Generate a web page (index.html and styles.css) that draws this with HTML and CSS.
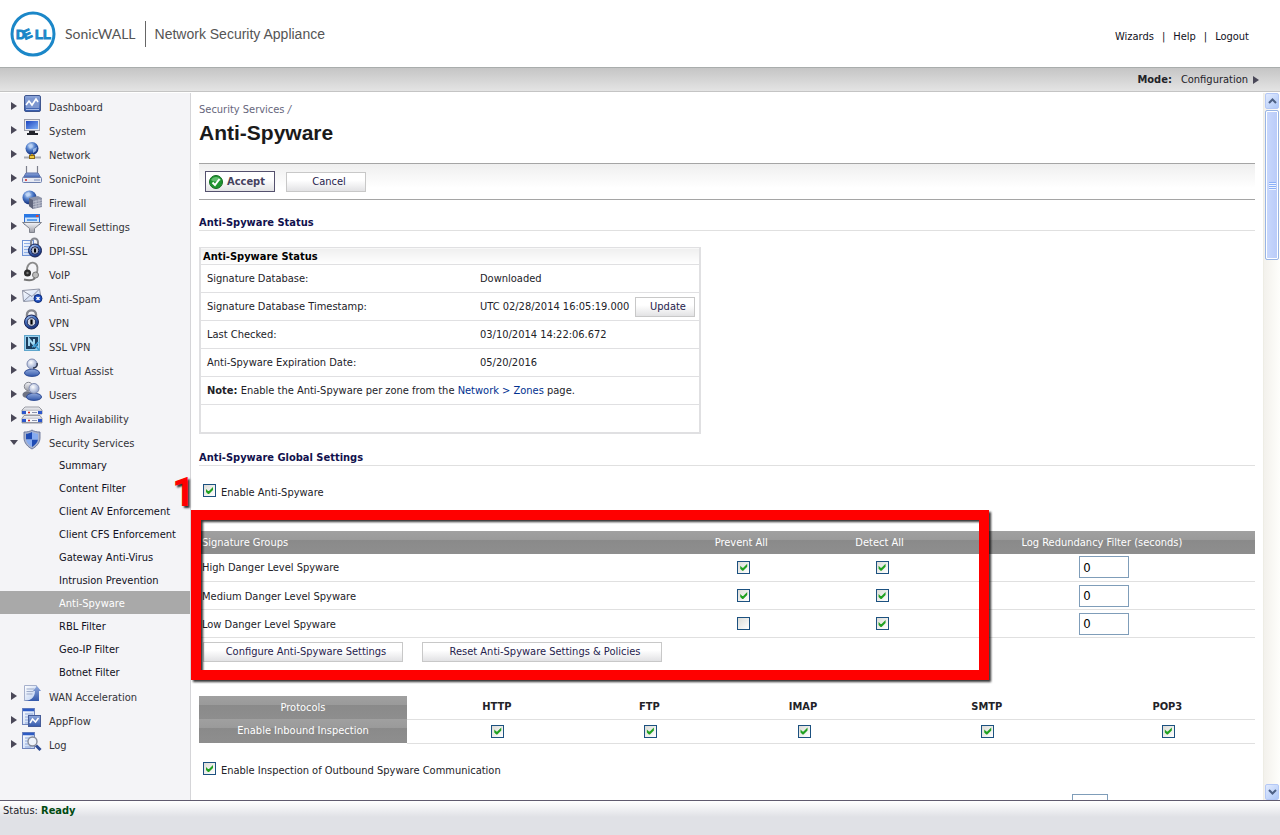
FILE: index.html
```html
<!DOCTYPE html>
<html lang="en">
<head>
    <meta charset="UTF-8">
    <meta name="viewport" content="width=device-width, initial-scale=1.0">
    <title>SonicWALL - Anti-Spyware</title>
    <link rel="stylesheet" href="styles.css">
</head>
<body>
    <svg class="defs" width="0" height="0" aria-hidden="true">
        <defs>
            <linearGradient id="blue" x1="0" y1="0" x2="0" y2="1">
                <stop offset="0" stop-color="#8fa8dc"/>
                <stop offset="1" stop-color="#3459ab"/>
            </linearGradient>
            <linearGradient id="screen" x1="0" y1="0" x2="1" y2="1">
                <stop offset="0" stop-color="#1c44c0"/>
                <stop offset="1" stop-color="#7fb0f5"/>
            </linearGradient>
            <linearGradient id="silver" x1="0" y1="0" x2="0" y2="1">
                <stop offset="0" stop-color="#f4f5f9"/>
                <stop offset="1" stop-color="#9a9ca6"/>
            </linearGradient>
            <linearGradient id="page" x1="0" y1="0" x2="1" y2="1">
                <stop offset="0" stop-color="#ffffff"/>
                <stop offset="1" stop-color="#b9cdf0"/>
            </linearGradient>
            <radialGradient id="globe" cx=".4" cy=".3" r=".7">
                <stop offset="0" stop-color="#d5e6fb"/>
                <stop offset=".5" stop-color="#4a78c8"/>
                <stop offset="1" stop-color="#122a72"/>
            </radialGradient>
            <radialGradient id="head" cx=".4" cy=".35" r=".7">
                <stop offset="0" stop-color="#ffffff"/>
                <stop offset="1" stop-color="#8a9cc8"/>
            </radialGradient>
        </defs>
    </svg>

    <header class="header">
        <div class="brand">
            <svg class="logo" width="46" height="46" viewBox="0 0 46 46" role="img" aria-label="Dell">
                <circle cx="23" cy="23" r="21" fill="#fff" stroke="#1b87c8" stroke-width="3"/>
                <text class="logo-text" x="6 15 25 33" y="28 29 28 28" rotate="0 -24 0 0">DELL</text>
            </svg>
            <span class="brand-name">SonicWALL</span>
            <span class="brand-product">Network Security Appliance</span>
        </div>
        <nav class="top-links">
            <a href="#">Wizards</a><span>|</span><a href="#">Help</a><span>|</span><a href="#">Logout</a>
        </nav>
    </header>

    <div class="mode-bar">
        <b>Mode:</b>
        <a href="#">Configuration</a>
        <i class="arrow"></i>
    </div>

    <div class="workspace">
        <nav class="sidebar">
            <ul class="menu">
                <li><a href="#"><i class="arrow"></i>
                    <svg class="icon" viewBox="0 0 20 20"><rect x="2.5" y="1.5" width="16" height="16" rx="1.5" fill="url(#blue)" stroke="#3f568f"/><rect x="4" y="4" width="13" height="10" fill="#7d97d0"/><path d="M4 11l3-4 3 4 4-6 2 3" fill="none" stroke="#fff" stroke-width="1.6"/><path d="M4 15.500h13" stroke="#a9bce6"/></svg>
                    <span>Dashboard</span></a></li>
                <li><a href="#"><i class="arrow"></i>
                    <svg class="icon" viewBox="0 0 20 20"><rect x="2.500" y="1.500" width="15" height="11" fill="#e8e9ee" stroke="#9b9da8"/><rect x="4" y="3" width="12" height="8" fill="url(#screen)"/><path d="M7 13h6v2h3v2H5v-2h2z" fill="#22242c"/></svg>
                    <span>System</span></a></li>
                <li><a href="#"><i class="arrow"></i>
                    <svg class="icon" viewBox="0 0 20 20"><circle cx="10" cy="6.500" r="6.500" fill="url(#globe)"/><path d="M6 3l4-1 1 3-3 2zM11 7l4-2-1 4-3 2z" fill="#b8d2f5" opacity=".7"/><path d="M2 15.500h17" stroke="#a9abb2" stroke-width="2"/><path d="M10 12v3" stroke="#c99a20" stroke-width="2"/><rect x="7.500" y="13.500" width="5" height="3" fill="#f0c93c" stroke="#8a6a14"/></svg>
                    <span>Network</span></a></li>
                <li><a href="#"><i class="arrow"></i>
                    <svg class="icon" viewBox="0 0 20 20"><path d="M4.500 0v8M15.500 0v8" stroke="#7c7f8c" stroke-width="1.200"/><path d="M4 7h12l3 5H1z" fill="url(#blue)" stroke="#5d73ad"/><rect x=".5" y="11.500" width="19" height="5" rx="1" fill="#e6e9f3" stroke="#6d7fae"/><path d="M3 14h2" stroke="#d02020" stroke-width="1.500"/><path d="M12 14h6" stroke="#7c8dbb"/></svg>
                    <span>SonicPoint</span></a></li>
                <li><a href="#"><i class="arrow"></i>
                    <svg class="icon" viewBox="0 0 20 20"><circle cx="7.500" cy="7.500" r="7" fill="url(#globe)"/><path d="M3 4l4-2 2 3-4 2z" fill="#c4d9f6" opacity=".7"/><path d="M7 8l9-2 4 2v9l-9 2-4-3z" fill="#8d93a8"/><path d="M7 8l4 2v9l-4-3z" fill="#5f657c"/><path d="M11 12l9-2M11 14.500l9-2M11 17l9-2M14 10v8M17 9v8" stroke="#c1c5d3" stroke-width=".8"/></svg>
                    <span>Firewall</span></a></li>
                <li><a href="#"><i class="arrow"></i>
                    <svg class="icon" viewBox="0 0 20 20"><rect x="2.500" y=".5" width="15" height="10" fill="#cfe4fb" stroke="#2c6bd0"/><rect x="2" y="0" width="16" height="3.500" fill="#2a78e4"/><rect x="14" y="1" width="2.500" height="2" fill="#e8452a"/><path d="M5 6h10" stroke="#5fa0ec" stroke-width="2"/><path d="M.5 8.500h19l-7 6v4h-5v-4z" fill="url(#silver)" stroke="#7f828c"/></svg>
                    <span>Firewall Settings</span></a></li>
                <li><a href="#"><i class="arrow"></i>
                    <svg class="icon" viewBox="0 0 20 20"><rect x=".5" y="2.500" width="11" height="15" fill="url(#page)" stroke="#6f92d4"/><path d="M2 5.500h7M2 8.500h7M2 11.500h7M2 14.500h7" stroke="#8fb0e8"/><path d="M9 8V4a3.500 3.500 0 0 1 7 0v3" fill="none" stroke="#84868e" stroke-width="2"/><circle cx="13" cy="12.500" r="6.500" fill="url(#globe)" stroke="#1a2454"/><circle cx="13" cy="12.500" r="3.800" fill="#b5bccd" stroke="#1a2454"/><path d="M13 10.500v4" stroke="#000" stroke-width="2"/></svg>
                    <span>DPI-SSL</span></a></li>
                <li><a href="#"><i class="arrow"></i>
                    <svg class="icon" viewBox="0 0 20 20"><path d="M5 10C4 4 8-.5 12 .8c4 1.200 4.500 7 2 11" fill="none" stroke="#8b8b8b" stroke-width="1.800"/><circle cx="5.500" cy="11" r="3.500" fill="#2a2a2a"/><circle cx="5.500" cy="11" r="1.200" fill="#777"/><circle cx="13.500" cy="13" r="3" fill="#bdbdbd" stroke="#777"/><path d="M13 16c-2 2.500-7 2.500-11 1.500" fill="none" stroke="#777" stroke-width="2"/></svg>
                    <span>VoIP</span></a></li>
                <li><a href="#"><i class="arrow"></i>
                    <svg class="icon" viewBox="0 0 20 20"><path d="M.5 4.500l17-1.500 2 11-18 1.500z" fill="url(#page)" stroke="#9297a8"/><path d="M.5 4.500l9.500 6 7.500-7.500M2 15l6-5.500M19 14l-7-5" fill="none" stroke="#8b90a2"/><circle cx="16" cy="12.500" r="4" fill="#1d4dc0" stroke="#12307c"/><path d="M14.500 11l3 3M17.500 11l-3 3" stroke="#fff" stroke-width="1.300"/></svg>
                    <span>Anti-Spam</span></a></li>
                <li><a href="#"><i class="arrow"></i>
                    <svg class="icon" viewBox="0 0 20 20"><path d="M5 8V4.500c0-5.500 9-5.500 9 0V8" fill="none" stroke="#85878f" stroke-width="2.400"/><circle cx="9.500" cy="12" r="7" fill="url(#globe)" stroke="#1a2454"/><circle cx="9.500" cy="12" r="4.300" fill="#d0d4df" stroke="#1a2454"/><path d="M9.500 9.500v5" stroke="#000" stroke-width="2.200"/></svg>
                    <span>VPN</span></a></li>
                <li><a href="#"><i class="arrow"></i>
                    <svg class="icon" viewBox="0 0 20 20"><rect x="2.500" y="1.500" width="15" height="15" fill="#9ad0ee" stroke="#5fa6cc"/><path d="M4 3h12v8l-3 4H4z" fill="#1c3e60"/><path d="M7 12V5l5 6V5" fill="none" stroke="#a4d8f2" stroke-width="2"/><path d="M10 13c3-1 5-2 6-5M12 10l5 6" fill="none" stroke="#3c9bd2" stroke-width="1.500"/></svg>
                    <span>SSL VPN</span></a></li>
                <li><a href="#"><i class="arrow"></i>
                    <svg class="icon" viewBox="0 0 20 20"><path d="M2.500 15c0-5 15-5 15 0 0 4.500-15 4.500-15 0z" fill="url(#blue)" stroke="#2c4a94"/><circle cx="10" cy="6" r="5" fill="url(#head)" stroke="#7f8bb0"/><path d="M15 5c1 3-1 5-4 5" fill="none" stroke="#333a50" stroke-width="1.500"/></svg>
                    <span>Virtual Assist</span></a></li>
                <li><a href="#"><i class="arrow"></i>
                    <svg class="icon" viewBox="0 0 20 20"><path d="M.5 13c0-5 10-5 10 0 0 4-10 4-10 0z" fill="#6d7283"/><circle cx="6.500" cy="4.500" r="4.200" fill="url(#silver)" stroke="#84868f"/><path d="M4.500 15c0-5 15-5 15 0 0 4.500-15 4.500-15 0z" fill="url(#blue)" stroke="#2c4a94"/><circle cx="12" cy="6.500" r="5" fill="url(#head)" stroke="#7f8bb0"/></svg>
                    <span>Users</span></a></li>
                <li><a href="#"><i class="arrow"></i>
                    <svg class="icon" viewBox="0 0 20 20"><path d="M3 1h14l3 3v4H0V4z" fill="url(#silver)" stroke="#84868f" stroke-width=".8"/><path d="M0 5h20v3H0z" fill="#f6f7fb"/><path d="M0 5h4v3H0zM16 5h4v3h-4z" fill="#2b56cc"/><path d="M6 6.500h2" stroke="#d02020" stroke-width="1.500"/><path d="M10 6.500h5" stroke="#8b93ad"/><path d="M2 9.500h16l2 3V17H0v-4.500z" fill="url(#silver)" stroke="#84868f" stroke-width=".8"/><path d="M0 13h20v3H0z" fill="#f6f7fb"/><path d="M0 13h4v3H0zM16 13h4v3h-4z" fill="#2b56cc"/><path d="M6 14.500h2" stroke="#d02020" stroke-width="1.500"/><path d="M10 14.500h5" stroke="#8b93ad"/></svg>
                    <span>High Availability</span></a></li>
                <li><a href="#"><i class="arrow arrow-open"></i>
                    <svg class="icon" viewBox="0 0 20 20"><path d="M10 0c2 1.500 5 2 8 2v6c0 5-4 9-8 11-4-2-8-6-8-11V2c3 0 6-.5 8-2z" fill="#a9b3cd" stroke="#5a678f" stroke-width=".8"/><path d="M10 2v7.500H4V3.800c2 0 4-.8 6-1.800zM10 9.500h6c-.5 3-3 5.500-6 7.500z" fill="#1e4bb4"/><path d="M10 2c2 1 4 1.800 6 1.800v5.700h-6zM4 9.500h6V17c-3-2-5.500-4.500-6-7.500z" fill="#86abf0"/></svg>
                    <span>Security Services</span></a>
                    <ul class="submenu">
                        <li><a href="#">Summary</a></li>
                        <li><a href="#">Content Filter</a></li>
                        <li><a href="#">Client AV Enforcement</a></li>
                        <li><a href="#">Client CFS Enforcement</a></li>
                        <li><a href="#">Gateway Anti-Virus</a></li>
                        <li><a href="#">Intrusion Prevention</a></li>
                        <li><a href="#" class="active">Anti-Spyware</a></li>
                        <li><a href="#">RBL Filter</a></li>
                        <li><a href="#">Geo-IP Filter</a></li>
                        <li><a href="#">Botnet Filter</a></li>
                    </ul></li>
                <li><a href="#"><i class="arrow"></i>
                    <svg class="icon" viewBox="0 0 20 20"><path d="M2.500 1.500h12v15h-12z" fill="url(#page)" stroke="#a6b0cc"/><path d="M4.500 5h8M4.500 7.500h7M4.500 10h6" stroke="#9eabc9"/><path d="M1 17c7 0 12-3 12-10h-2l4-5 4 5h-2v10z" fill="url(#blue)"/></svg>
                    <span>WAN Acceleration</span></a></li>
                <li><a href="#"><i class="arrow"></i>
                    <svg class="icon" viewBox="0 0 20 20"><rect x=".5" y=".5" width="12" height="16" fill="url(#page)" stroke="#6f84bb"/><path d="M1 2h11" stroke="#2d5bc4" stroke-width="2.500"/><path d="M3 6h8M3 9h4M3 12h3M3 15h3" stroke="#8fa9dc"/><rect x="6.500" y="7.500" width="12" height="11" fill="url(#blue)" stroke="#465c98"/><path d="M8 15l2.500-4 3 3 3-4" fill="none" stroke="#fff" stroke-width="1.500"/></svg>
                    <span>AppFlow</span></a></li>
                <li><a href="#"><i class="arrow"></i>
                    <svg class="icon" viewBox="0 0 20 20"><rect x=".5" y=".5" width="12" height="16" fill="url(#page)" stroke="#6f84bb"/><path d="M1 2h11" stroke="#2d5bc4" stroke-width="2.500"/><path d="M3 6h8M3 9h4M3 12h3M3 15h6" stroke="#8fa9dc"/><path d="M14 13.500l4.500 4.500" stroke="#2c4a94" stroke-width="3"/><circle cx="10.500" cy="9.500" r="4.500" fill="#eef3fb" stroke="#868b99" stroke-width="1.400"/></svg>
                    <span>Log</span></a></li>
            </ul>
        </nav>

        <main class="main">
            <div class="breadcrumb">Security Services <i>/</i></div>
            <h1>Anti-Spyware</h1>

            <div class="toolbar">
                <button type="button" class="btn btn-accept">
                    <svg width="14" height="14" viewBox="0 0 14 14" aria-hidden="true"><circle cx="7" cy="7" r="6.500" fill="#1f9430" stroke="#146b20"/><path d="M2 5c2-4 8-4 10 0-3 2-7 2-10 0z" fill="#7fd08a" opacity=".7"/><path d="M3.500 7.500l2.500 2.500 4.500-6" fill="none" stroke="#fff" stroke-width="2"/></svg>
                    Accept</button>
                <button type="button" class="btn btn-cancel">Cancel</button>
            </div>

            <h2>Anti-Spyware Status</h2>
            <table class="status">
                <thead>
                    <tr><th colspan="2">Anti-Spyware Status</th></tr>
                </thead>
                <tbody>
                    <tr><td class="label">Signature Database:</td><td>Downloaded</td></tr>
                    <tr><td class="label">Signature Database Timestamp:</td><td><div class="timestamp">UTC 02/28/2014 16:05:19.000 <button type="button" class="btn btn-update">Update</button></div></td></tr>
                    <tr><td class="label">Last Checked:</td><td>03/10/2014 14:22:06.672</td></tr>
                    <tr><td class="label">Anti-Spyware Expiration Date:</td><td>05/20/2016</td></tr>
                    <tr><td class="label" colspan="2"><b>Note:</b> Enable the Anti-Spyware per zone from the <a href="#">Network &gt; Zones</a> page.</td></tr>
                    <tr><td colspan="2"></td></tr>
                </tbody>
            </table>

            <h2>Anti-Spyware Global Settings</h2>
            <div class="check-line">
                <input type="checkbox" id="enable" checked>
                <label for="enable">Enable Anti-Spyware</label>
            </div>

            <div class="groups-area">
                <table class="groups">
                    <thead>
                        <tr>
                            <th>Signature Groups</th>
                            <th>Prevent All</th>
                            <th>Detect All</th>
                            <th>Log Redundancy Filter (seconds)</th>
                        </tr>
                    </thead>
                    <tbody>
                        <tr>
                            <td>High Danger Level Spyware</td>
                            <td><input type="checkbox" aria-label="Prevent high danger" checked></td>
                            <td><input type="checkbox" aria-label="Detect high danger" checked></td>
                            <td><input type="text" aria-label="High danger log filter" value="0"></td>
                        </tr>
                        <tr>
                            <td>Medium Danger Level Spyware</td>
                            <td><input type="checkbox" aria-label="Prevent medium danger" checked></td>
                            <td><input type="checkbox" aria-label="Detect medium danger" checked></td>
                            <td><input type="text" aria-label="Medium danger log filter" value="0"></td>
                        </tr>
                        <tr>
                            <td>Low Danger Level Spyware</td>
                            <td><input type="checkbox" aria-label="Prevent low danger"></td>
                            <td><input type="checkbox" aria-label="Detect low danger" checked></td>
                            <td><input type="text" aria-label="Low danger log filter" value="0"></td>
                        </tr>
                    </tbody>
                </table>
                <div class="group-buttons">
                    <button type="button" class="btn btn-configure">Configure Anti-Spyware Settings</button>
                    <button type="button" class="btn btn-reset">Reset Anti-Spyware Settings &amp; Policies</button>
                </div>
                <div class="callout"></div>
                <span class="callout-number">1</span>
            </div>

            <table class="protocols">
                <tr>
                    <th class="row-head">Protocols</th>
                    <th>HTTP</th>
                    <th>FTP</th>
                    <th>IMAP</th>
                    <th>SMTP</th>
                    <th>POP3</th>
                </tr>
                <tr>
                    <th class="row-head">Enable Inbound Inspection</th>
                    <td><input type="checkbox" aria-label="HTTP" checked></td>
                    <td><input type="checkbox" aria-label="FTP" checked></td>
                    <td><input type="checkbox" aria-label="IMAP" checked></td>
                    <td><input type="checkbox" aria-label="SMTP" checked></td>
                    <td><input type="checkbox" aria-label="POP3" checked></td>
                </tr>
            </table>

            <div class="check-line">
                <input type="checkbox" id="outbound" checked>
                <label for="outbound">Enable Inspection of Outbound Spyware Communication</label>
            </div>
            <div class="next-row"><input type="text" aria-label="Value"></div>
        </main>

        <div class="scrollbar" aria-hidden="true">
            <div class="scroll-btn"><svg width="9" height="6" viewBox="0 0 9 6"><path d="M1 5l3.500-3.500L8 5" fill="none" stroke="#4d6185" stroke-width="2"/></svg></div>
            <div class="thumb"><i></i><i></i><i></i><i></i></div>
            <div class="track"></div>
            <div class="scroll-btn"><svg width="9" height="6" viewBox="0 0 9 6"><path d="M1 1l3.500 3.500L8 1" fill="none" stroke="#4d6185" stroke-width="2"/></svg></div>
        </div>
    </div>

    <footer class="status-bar">Status: <b>Ready</b></footer>
</body>
</html>
```

FILE: styles.css
```css
* {
    box-sizing: border-box;
}
body {
    margin: 0;
    height: 100vh;
    display: flex;
    flex-direction: column;
    font-family: Tahoma, "DejaVu Sans Condensed", "DejaVu Sans", sans-serif;
    font-size: 11px;
    line-height: 14px;
    color: #222228;
    background: #fff;
}
a {
    color: inherit;
    text-decoration: none;
}
ul {
    list-style: none;
    margin: 0;
    padding: 0;
}
table {
    border-collapse: collapse;
}
.defs {
    position: absolute;
}

/* header */
.header {
    display: flex;
    justify-content: space-between;
    align-items: center;
    height: 68px;
    padding: 0 31px 0 10px;
    border-bottom: 1px solid #a9adac;
}
.brand {
    display: flex;
    align-items: center;
    color: #555;
}
.logo-text {
    font: bold 13px "Liberation Sans", Arial, sans-serif;
    fill: #1b87c8;
    stroke: #1b87c8;
    stroke-width: 1px;
}
.brand-name {
    margin-left: 9px;
    padding-right: 9px;
    border-right: 1px solid #666;
    font-family: Lato, sans-serif;
    font-size: 14px;
    line-height: 26px;
}
.brand-product {
    margin-left: 9px;
    font-family: "Liberation Sans", Arial, sans-serif;
    font-size: 14px;
}
.top-links {
    display: flex;
    gap: 8px;
    padding-top: 6px;
    color: #112;
}
.mode-bar {
    display: flex;
    justify-content: flex-end;
    align-items: center;
    height: 24px;
    padding: 1px 21px 0 0;
    background: linear-gradient(#c5c5c5, #e4e4e4);
    border-bottom: 1px solid #c4c4c4;
}
.mode-bar a {
    margin: 0 5px 0 9px;
}
.arrow {
    width: 0;
    border: 4px solid transparent;
    border-left: 6px solid #4a4858;
    border-right: 0;
}
.arrow-open {
    border: 4px solid transparent;
    border-top: 5px solid #4a4858;
    border-bottom: 0;
}

/* workspace */
.workspace {
    display: flex;
    flex: 1;
    min-height: 0;
    overflow: hidden;
    padding-top: 1px;
}
.sidebar {
    flex: none;
    width: 191px;
    background: #f4f4f7;
    border-right: 1px solid #d5d5d8;
    color: #333338;
}
.menu > li > a {
    display: flex;
    align-items: center;
    height: 24px;
    padding-left: 11px;
}
.menu .arrow {
    margin-top: 2px;
    margin-right: 5px;
}
.menu .arrow-open {
    margin-left: -1px;
    margin-right: 4px;
}
.menu span {
    margin-left: 7px;
    padding-top: 6px;
}
.icon {
    width: 20px;
    height: 20px;
    margin-bottom: 2px;
    overflow: visible;
}
.submenu a {
    display: block;
    padding: 2px 0 0 59px;
    line-height: 21px;
    color: #112;
}
.submenu .active {
    background: #a9a9a9;
    color: #fff;
}

/* content */
.main {
    flex: 1;
    min-width: 0;
    padding: 10px 8px 0;
}
.breadcrumb {
    color: #66667c;
}
h1 {
    margin: 3px 0 17px;
    font: bold 21px/26px "Liberation Sans", Arial, sans-serif;
    color: #1a1a1a;
}
h2 {
    margin: 0;
    border-bottom: 1px solid #e0e0e0;
    font-size: 11px;
    line-height: 14px;
    color: #11114d;
}
.toolbar {
    display: flex;
    align-items: center;
    gap: 11px;
    height: 37px;
    margin-bottom: 16px;
    padding-left: 6px;
    background: linear-gradient(#efefef, #fff 24px);
    border-top: 1px solid #a5a5a5;
    border-bottom: 1px solid #a5a5a5;
}
.btn {
    height: 20px;
    padding: 0 0 0 6px;
    border: 1px solid #c8c8c8;
    background: linear-gradient(#fff 40%, #e2e2e4);
    font: inherit;
    color: #26224d;
}
.btn-accept {
    display: flex;
    align-items: center;
    gap: 4px;
    width: 70px;
    height: 21px;
    padding: 0 3px;
    border-color: #55516e;
    font-weight: bold;
    color: #45415e;
}
.btn-cancel {
    width: 80px;
}
.btn-update {
    width: 60px;
}
.btn-configure {
    width: 200px;
}
.btn-reset {
    width: 240px;
}

.status {
    width: 502px;
    margin: 16px 0 17px;
    border: 2px solid #e0e0e2;
    border-top-width: 1px;
}
.status th {
    height: 17px;
    padding: 1px 2px 0;
    background: linear-gradient(#efefef, #fff);
    text-align: left;
    color: #000;
}
.status td {
    height: 28px;
    padding: 1px 0 0;
    border-top: 1px solid #e0e0e2;
}
.status .label {
    width: 280px;
    padding-left: 6px;
}
.status a {
    color: #003090;
}
.timestamp {
    display: flex;
    align-items: center;
    justify-content: space-between;
    padding-right: 4px;
}

.check-line {
    display: flex;
    align-items: center;
    gap: 5px;
    height: 18px;
    margin: 16px 0;
    padding-left: 4px;
}
.check-line label {
    padding-top: 4px;
}
input[type="checkbox"] {
    appearance: none;
    display: block;
    width: 13px;
    height: 13px;
    margin: 0;
    border: 1px solid #1c5180;
    background: linear-gradient(135deg, #dcdcd7, #fff);
}
input[type="checkbox"]:checked::before {
    content: "";
    display: block;
    width: 11px;
    height: 11px;
    background: #21a121;
    clip-path: polygon(2px 4px, 4px 6px, 5px 6px, 9px 2px, 9px 5px, 5px 9px, 4px 9px, 2px 7px);
}
input[type="text"] {
    display: block;
    width: 50px;
    height: 22px;
    padding: 0 3px;
    border: 1px solid #7f9db9;
    font: 13px "DejaVu Sans Condensed", sans-serif;
    color: #000;
}

.groups-area {
    position: relative;
    margin: 31px 0 34px;
}
.groups,
.protocols {
    width: 100%;
    table-layout: fixed;
}
.groups th {
    height: 23px;
    padding: 2px 3px 0;
    font-weight: normal;
    color: #fff;
}
.groups thead,
.row-head {
    background: linear-gradient(#a0a0a0, #9a9a9a 9px, #8a8a8a 9px, #8e8e8e);
}
.groups th:first-child {
    width: 44.8%;
    text-align: left;
}
.groups th:nth-child(2),
.groups th:nth-child(3) {
    width: 13.1%;
}
.groups td {
    height: 28px;
    padding: 0 0 0 5px;
    border-bottom: 1px solid #e0e0e0;
}
.groups td:first-child {
    padding: 2px 3px 0;
}
.groups input {
    margin: 0 auto;
}
.group-buttons {
    display: flex;
    gap: 19px;
    padding: 4px 4px 0;
}

/* highlighted area on the page */
.callout {
    position: absolute;
    top: -21px;
    left: -8px;
    width: 75.6%;
    height: 170px;
    border: 10px solid #f00;
    filter: drop-shadow(2px 2px 1px rgba(0, 0, 0, 0.8));
    pointer-events: none;
}
.callout-number {
    position: absolute;
    top: -58px;
    left: -27px;
    font: bold 40px/40px Roboto, sans-serif;
    color: #f00;
    text-shadow: 2px 2px 2px rgba(0, 0, 0, 0.8);
}

.protocols th,
.protocols td {
    height: 24px;
    padding: 0;
    border-bottom: 1px solid #e0e0e0;
}
.protocols tr:first-child th {
    height: 23px;
}
.protocols td {
    padding-left: 2px;
}
.protocols th:nth-child(1) {
    width: 19.7%;
}
.protocols th:nth-child(2) {
    width: 17%;
}
.protocols th:nth-child(3) {
    width: 11.9%;
}
.protocols th:nth-child(4) {
    width: 17.2%;
}
.protocols th:nth-child(5) {
    width: 17.6%;
}
.protocols .row-head {
    border: 0;
    font-weight: normal;
    color: #fff;
}
.protocols input {
    margin: 0 auto;
}
.next-row {
    display: flex;
    justify-content: flex-end;
    padding-right: 147px;
}
.next-row input {
    width: 36px;
}

/* scrollbar */
.scrollbar {
    flex: none;
    display: flex;
    flex-direction: column;
    width: 17px;
    border-left: 1px solid #eeede5;
    background: linear-gradient(90deg, #f3f1ec, #fefefb);
}
.scroll-btn {
    display: flex;
    align-items: center;
    justify-content: center;
    height: 16px;
    margin: 0 1px;
    border: 1px solid #b4c8f6;
    border-radius: 2px;
    background: linear-gradient(135deg, #e1eafe, #aec8f7);
}
.thumb {
    display: flex;
    flex-direction: column;
    align-items: center;
    justify-content: center;
    gap: 1px;
    height: 150px;
    margin: 1px 1px 0;
    border: 1px solid #98b4e4;
    border-radius: 2px;
    background: linear-gradient(90deg, #c9d8fc, #b9cbf9);
    box-shadow: inset 0 0 0 1px #fff;
}
.thumb i {
    width: 7px;
    height: 1px;
    background: #8cb0f8;
    box-shadow: 0 1px #eef4fe;
}
.track {
    flex: 1;
}

.status-bar {
    height: 35px;
    padding: 3px 3px 0;
    border-top: 1px solid #5f5a6e;
    background: linear-gradient(#fff, #e0e1e6 16px);
}
.status-bar b {
    color: #004a10;
}
```
